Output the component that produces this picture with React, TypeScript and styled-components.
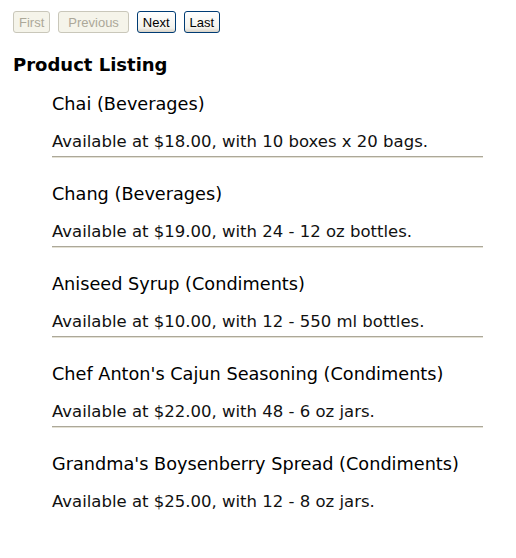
import React from 'react';
import styled, { createGlobalStyle } from 'styled-components';

interface Product {
  name: string;
  category: string;
  price: number;
  quantity: string;
}

const products: Product[] = [
  { name: 'Chai', category: 'Beverages', price: 18, quantity: '10 boxes x 20 bags' },
  { name: 'Chang', category: 'Beverages', price: 19, quantity: '24 - 12 oz bottles' },
  { name: 'Aniseed Syrup', category: 'Condiments', price: 10, quantity: '12 - 550 ml bottles' },
  { name: "Chef Anton's Cajun Seasoning", category: 'Condiments', price: 22, quantity: '48 - 6 oz jars' },
  { name: "Grandma's Boysenberry Spread", category: 'Condiments', price: 25, quantity: '12 - 8 oz jars' },
];

const GlobalStyle = createGlobalStyle`
  body {
    margin: 8px;
    background: #fff;
    font-family: "DejaVu Sans", Verdana, sans-serif;
    color: #000;
  }
`;

export default function App() {
  return (
    <>
      <GlobalStyle />
      <Page>
        <Pager>
          <PagerButton disabled>First</PagerButton>
          <PagerButton disabled $padX={9}>Previous</PagerButton>
          <PagerButton>Next</PagerButton>
          <PagerButton>Last</PagerButton>
        </Pager>
        <Heading>Product Listing</Heading>
        <ProductList>
          {products.map((p, i) => (
            <ProductItem key={p.name} $divider={i < products.length - 1}>
              <ProductName>
                {p.name} ({p.category})
              </ProductName>
              <ProductInfo>
                Available at ${p.price.toFixed(2)}, with {p.quantity}.
              </ProductInfo>
            </ProductItem>
          ))}
        </ProductList>
      </Page>
    </>
  );
}

const Page = styled.div`
  padding: 3px 5px 0;
`;

const Pager = styled.div`
  display: flex;
  gap: 8px;
`;

const PagerButton = styled.button<{ $padX?: number }>`
  height: 22px;
  padding: 0 ${(p) => p.$padX ?? 5}px;
  font-family: "Liberation Sans", Arial, sans-serif;
  font-size: 13px;
  color: #000;
  border: 1px solid #003c74;
  border-radius: 3px;
  background: linear-gradient(#ffffff, #f3f2ec 80%, #d8d2c6);
  cursor: pointer;

  &:disabled {
    color: #aca899;
    border-color: #c9c7ba;
    background: #f5f4ea;
    cursor: default;
  }
`;

const Heading = styled.h3`
  margin: 20px 0 0;
  font-size: 18px;
  line-height: 24px;
  font-weight: bold;
`;

const ProductList = styled.ul`
  list-style: none;
  margin: 17px 0 0;
  padding: 0 20px 0 39px;
`;

const ProductItem = styled.li<{ $divider: boolean }>`
  padding: 0 0 4px;
  margin-bottom: 27px;
  ${(p) =>
    p.$divider &&
    `
    border-bottom: 1px solid #aca899;
    box-shadow: 0 1px 0 #e4e1d4;
  `}
`;

const ProductName = styled.div`
  font-size: 17.7px;
  line-height: 20px;
  margin-bottom: 18px;
`;

const ProductInfo = styled.div`
  font-size: 16.5px;
  line-height: 20px;
  color: #111;
`;
